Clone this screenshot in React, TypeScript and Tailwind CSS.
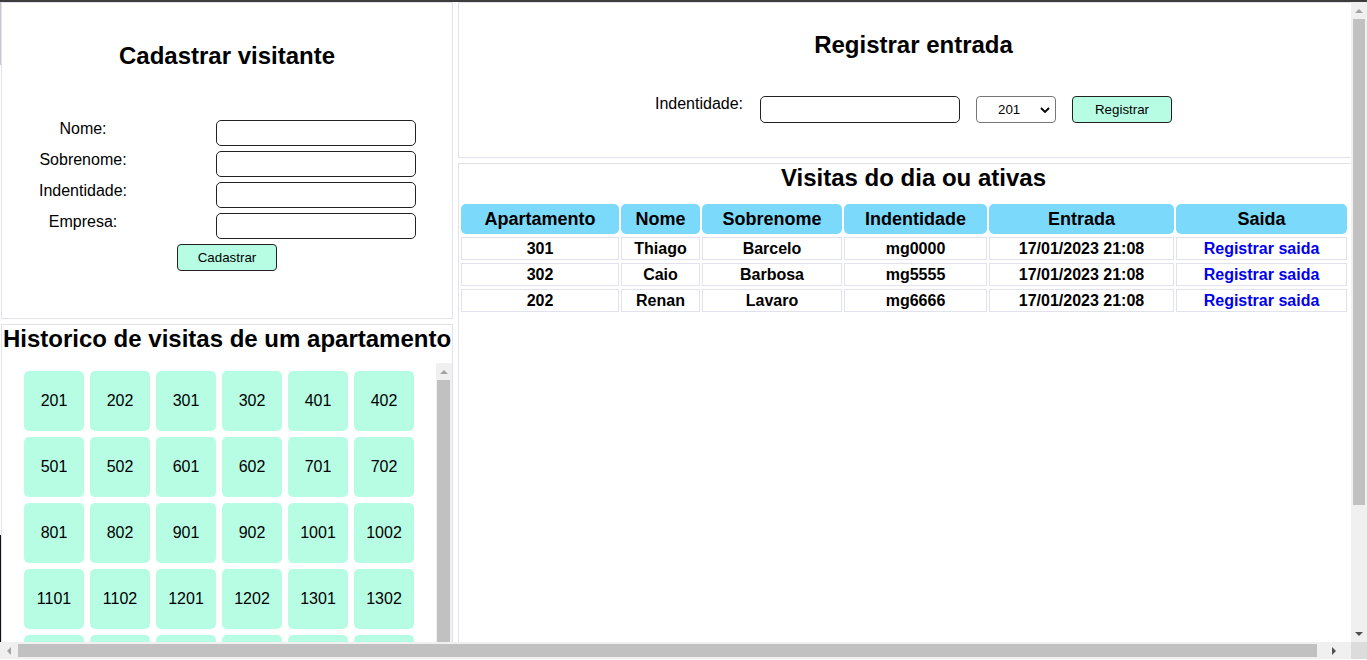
import React from "react";

const apartamentos = [
  "201", "202", "301", "302", "401", "402",
  "501", "502", "601", "602", "701", "702",
  "801", "802", "901", "902", "1001", "1002",
  "1101", "1102", "1201", "1202", "1301", "1302",
  "1401", "1402", "1501", "1502", "1601", "1602",
];

const visitas = [
  { ap: "301", nome: "Thiago", sobrenome: "Barcelo", id: "mg0000", entrada: "17/01/2023 21:08" },
  { ap: "302", nome: "Caio", sobrenome: "Barbosa", id: "mg5555", entrada: "17/01/2023 21:08" },
  { ap: "202", nome: "Renan", sobrenome: "Lavaro", id: "mg6666", entrada: "17/01/2023 21:08" },
];

const campos = ["Nome:", "Sobrenome:", "Indentidade:", "Empresa:"];

function Arrow({ dir, color }: { dir: "up" | "down" | "left" | "right"; color: string }) {
  const pts = {
    up: "0,4 4,0 8,4",
    down: "0,0 8,0 4,4",
    left: "4,0 4,8 0,4",
    right: "0,0 0,8 4,4",
  }[dir];
  const horiz = dir === "up" || dir === "down";
  return (
    <svg width={horiz ? 8 : 4} height={horiz ? 4 : 8} viewBox={horiz ? "0 0 8 4" : "0 0 4 8"}>
      <polygon points={pts} fill={color} />
    </svg>
  );
}

function CadastrarVisitante() {
  return (
    <section className="h-[317px] shrink-0 border border-[#e2e2ee]">
      <h2 className="mt-[39px] text-center text-[24px] leading-[28px] font-bold">Cadastrar visitante</h2>
      <div className="mt-[50px] flex flex-col gap-[5px]">
        {campos.map((c) => (
          <div key={c} className="flex items-start">
            <label className="ml-[18px] w-[126px] text-center text-[16px] leading-[18px]">{c}</label>
            <input className="ml-[70px] h-[26px] w-[200px] rounded-[5px] border border-[#222] bg-white" />
          </div>
        ))}
      </div>
      <div className="mt-[5px] flex justify-center">
        <button className="h-[27px] w-[100px] rounded-[4px] border border-[#222] bg-[#b6fde4] text-[13.33px]">
          Cadastrar
        </button>
      </div>
    </section>
  );
}

function Historico() {
  return (
    <section className="flex min-h-0 flex-1 flex-col border-x border-t border-[#e2e2ee]">
      <h2 className="whitespace-nowrap text-center text-[24px] leading-[28px] font-bold">
        Historico de visitas de um apartamento
      </h2>
      <div className="mt-[10px] flex min-h-0 flex-1 overflow-hidden">
        <div className="flex flex-1 justify-center pt-[8px]">
          <div className="grid h-max grid-cols-[repeat(6,60px)] gap-[6px]">
            {apartamentos.map((a) => (
              <button
                key={a}
                className="flex h-[60px] w-[60px] items-center justify-center rounded-[5px] bg-[#b6fde4] text-[16px]"
              >
                {a}
              </button>
            ))}
          </div>
        </div>
        <div className="flex w-[16px] shrink-0 flex-col bg-[#f0f0f0]">
          <div className="flex h-[17px] items-center justify-center">
            <Arrow dir="up" color="#a3a3a3" />
          </div>
          <div className="ml-[1px] w-[13px] flex-1 bg-[#c1c1c1]" />
        </div>
      </div>
    </section>
  );
}

function RegistrarEntrada() {
  return (
    <section className="h-[156px] shrink-0 border border-[#e2e2ee]">
      <h2 className="mt-[28px] text-center text-[24px] leading-[28px] font-bold">Registrar entrada</h2>
      <div className="mt-[37px] flex items-start justify-center">
        <label className="-mt-[1px] text-[16px] leading-[18px]">Indentidade:</label>
        <input className="ml-[17px] h-[27px] w-[200px] rounded-[5px] border border-[#222] bg-white" />
        <div className="ml-[16px] flex h-[27px] w-[80px] items-center rounded-[4px] border border-[#767676] bg-white pl-[21px] pr-[5px] text-[13.33px]">
          <span className="flex-1">201</span>
          <svg width="10" height="6" viewBox="0 0 10 6">
            <path d="M1 1l4 4 4-4" fill="none" stroke="#000" strokeWidth="1.8" />
          </svg>
        </div>
        <button className="ml-[16px] h-[27px] w-[100px] rounded-[4px] border border-[#222] bg-[#b6fde4] text-[13.33px]">
          Registrar
        </button>
      </div>
    </section>
  );
}

function VisitasDoDia() {
  const cols = ["Apartamento", "Nome", "Sobrenome", "Indentidade", "Entrada", "Saida"];
  return (
    <section className="flex-1 border-x border-t border-[#e2e2ee]">
      <h2 className="text-center text-[24px] leading-[27px] font-bold">Visitas do dia ou ativas</h2>
      <div className="ml-[2px] mt-[13px] grid w-max grid-cols-[158px_79px_140px_143px_185px_171px] gap-x-[2px] gap-y-[3px]">
        {cols.map((c) => (
          <div
            key={c}
            className="flex h-[30px] items-center justify-center rounded-[5px] bg-[#7bdafc] text-[18px] font-bold"
          >
            {c}
          </div>
        ))}
        {visitas.map((v) =>
          [v.ap, v.nome, v.sobrenome, v.id, v.entrada].map((t, i) => (
            <div
              key={v.ap + i}
              className="flex h-[23px] items-center justify-center border border-[#e2e2ee] text-[16px] font-bold"
            >
              {t}
            </div>
          )).concat(
            <div
              key={v.ap + "saida"}
              className="flex h-[23px] items-center justify-center border border-[#e2e2ee] text-[16px] font-bold text-[#0000ee]"
            >
              <a>Registrar saida</a>
            </div>
          )
        )}
      </div>
    </section>
  );
}

export default function App() {
  return (
    <div className="flex h-[660px] w-[1367px] flex-col overflow-hidden bg-white font-['Liberation_Sans',Arial,sans-serif] text-black">
      <div className="h-[2px] shrink-0 bg-[#3c3c3c]" />
      <div className="flex min-h-0 flex-1">
        <div className="flex min-w-0 flex-1 overflow-hidden">
          <div className="flex w-[1px] shrink-0 flex-col">
            <div className="h-[63px] bg-[#c8c8c8]" />
            <div className="h-[470px]" />
            <div className="flex-1 bg-[#111]" />
          </div>
          <div className="flex w-[1368px] shrink-0 gap-[5px]">
            <div className="flex w-[452px] shrink-0 flex-col gap-[5px]">
              <CadastrarVisitante />
              <Historico />
            </div>
            <div className="flex w-[911px] shrink-0 flex-col gap-[5px]">
              <RegistrarEntrada />
              <VisitasDoDia />
            </div>
          </div>
        </div>
        <div className="flex w-[16px] shrink-0 flex-col bg-[#f0f0f0]">
          <div className="flex h-[17px] items-center justify-center">
            <Arrow dir="up" color="#a3a3a3" />
          </div>
          <div className="mx-[2px] h-[486px] bg-[#c1c1c1]" />
          <div className="flex-1" />
          <div className="flex h-[17px] items-center justify-center">
            <Arrow dir="down" color="#505050" />
          </div>
        </div>
      </div>
      <div className="flex h-[17px] shrink-0 bg-[#f0f0f0]">
        <div className="flex w-[17px] items-center justify-center">
          <Arrow dir="left" color="#a3a3a3" />
        </div>
        <div className="my-[2px] ml-[1px] w-[1299px] bg-[#c1c1c1]" />
        <div className="flex flex-1 items-center justify-center">
          <Arrow dir="right" color="#505050" />
        </div>
        <div className="w-[16px] bg-[#dcdcdc]" />
      </div>
      <div className="h-[1px] shrink-0 bg-white" />
    </div>
  );
}
